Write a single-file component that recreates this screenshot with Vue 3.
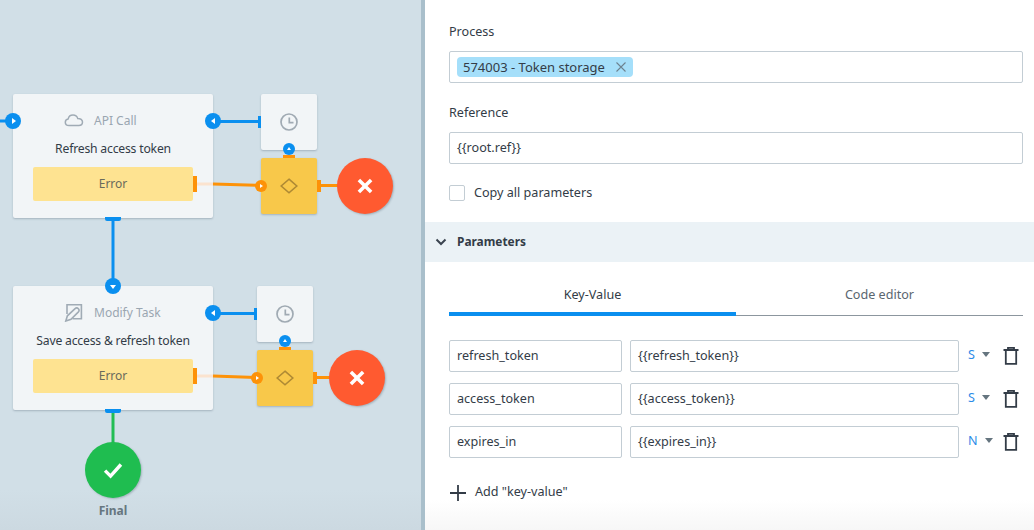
<template>
  <div class="page">
    <div class="canvas">
      <div v-for="task in tasks" :key="task.name" class="task" :style="{ top: task.top + 'px' }">
        <div class="task-head">
          <svg v-if="task.icon === 'cloud'" class="task-icon" viewBox="0 0 20 20" width="20" height="20">
            <path d="M5 15.500C2.800 15.500 1.300 14 1.300 12.200C1.300 10.400 2.600 9.100 4.200 8.900C4.700 6.600 6.600 5 9 5C11.300 5 13.100 6.400 13.700 8.400C16.500 8.300 18.500 9.900 18.500 12C18.500 14 17 15.500 14.800 15.500Z" fill="none" stroke="#a0abb5" stroke-width="1.500" />
          </svg>
          <svg v-else class="task-icon" viewBox="0 0 20 20" width="20" height="20">
            <path d="M3 12V2.800H17.400V16.800H8.500" fill="none" stroke="#a0abb5" stroke-width="1.600" />
            <path d="M1.800 19L3.400 13.800L10.800 6.800C12 5.800 13.500 5.800 14.400 6.700C15.300 7.700 15.200 9 14.200 10.100L7 17.300Z" fill="#f2f5f7" stroke="#a0abb5" stroke-width="1.600" />
          </svg>
          <span class="task-type">{{ task.type }}</span>
        </div>
        <div class="task-name">{{ task.name }}</div>
        <div class="task-error">Error<i class="err-port"></i></div>
      </div>

      <svg class="wires" width="425" height="530">
        <path d="M0 121H13" stroke="#0a8fef" stroke-width="3" fill="none" />
        <path d="M213 121.500H261" stroke="#0a8fef" stroke-width="3" fill="none" />
        <path d="M113 218V286" stroke="#0a8fef" stroke-width="3" fill="none" />
        <path d="M213 313.500H257" stroke="#0a8fef" stroke-width="3" fill="none" />
        <path d="M113 410V443" stroke="#22bd54" stroke-width="3" fill="none" />
        <path d="M213 184L261 185.500" stroke="#fd9208" stroke-width="3" fill="none" />
        <path d="M197 184H213" stroke="#fbe3cf" stroke-width="3" fill="none" />
        <path d="M213 376L257 377.500" stroke="#fd9208" stroke-width="3" fill="none" />
        <path d="M197 376H213" stroke="#fbe3cf" stroke-width="3" fill="none" />
        <path d="M317 185.500H340" stroke="#fd9208" stroke-width="3" fill="none" />
        <path d="M313 377.500H332" stroke="#fd9208" stroke-width="3" fill="none" />
      </svg>

      <i class="port-bottom p1"></i>
      <i class="port-bottom p2"></i>

      <div v-for="group in groups" :key="group.timerTop">
        <div class="square timer" :style="{ left: group.left + 'px', top: group.timerTop + 'px' }">
          <svg viewBox="0 0 20 20" width="20" height="20">
            <circle cx="10" cy="10" r="8" fill="none" stroke="#a0aab3" stroke-width="1.700" />
            <path d="M10.300 5.500V10.700H14.500" fill="none" stroke="#a0aab3" stroke-width="1.700" />
          </svg>
        </div>
        <div class="square gateway" :style="{ left: group.left + 'px', top: group.timerTop + 64 + 'px' }">
          <svg viewBox="0 0 18 16" width="18" height="16">
            <path d="M9 1.200L16.800 8L9 14.800L1.200 8Z" fill="none" stroke="#af8a34" stroke-width="1.600" />
          </svg>
        </div>
        <span class="dot blue small up" :style="{ left: group.left + 22 + 'px', top: group.timerTop + 49 + 'px' }"></span>
        <i class="tick-top" :style="{ left: group.left + 22 + 'px', top: group.timerTop + 61 + 'px' }"></i>
        <i class="tick-side" :style="{ left: group.left + 56 + 'px', top: group.timerTop + 86 + 'px' }"></i>
        <i class="tick-timer" :style="{ left: group.left - 3 + 'px', top: group.timerTop + 22 + 'px' }"></i>
        <span class="dot orange" :style="{ left: group.left - 6 + 'px', top: group.timerTop + 86 + 'px' }"></span>
        <span class="dot blue left" :style="{ left: group.dotLeft + 'px', top: group.timerTop + 19 + 'px' }"></span>
        <div class="end red" :style="{ left: group.endLeft + 'px', top: group.timerTop + 64 + 'px' }">
          <svg viewBox="0 0 18 18" width="20" height="20">
            <path d="M3.500 3.500L14.500 14.500M14.500 3.500L3.500 14.500" stroke="#fff" stroke-width="3.200" fill="none" />
          </svg>
        </div>
      </div>

      <span class="dot blue right start"></span>
      <span class="dot blue down mid"></span>

      <div class="end green">
        <svg viewBox="0 0 18 18" width="22" height="22">
          <path d="M2.500 9.500L7 14L15.500 4.500" stroke="#fff" stroke-width="2.800" fill="none" />
        </svg>
      </div>
      <div class="final">Final</div>
    </div>

    <div class="panel">
      <div class="fields">
        <label class="field-label">Process</label>
        <div class="input tag-input">
          <span class="tag">574003 - Token storage
            <svg viewBox="0 0 12 12" width="12" height="12">
              <path d="M1.500 1.500L10.500 10.500M10.500 1.500L1.500 10.500" stroke="#6d8290" stroke-width="1.100" fill="none" />
            </svg>
          </span>
        </div>
        <label class="field-label second">Reference</label>
        <div class="input">{{ "{" + "{root.ref}" + "}" }}</div>
        <div class="check-row">
          <span class="checkbox"></span>
          <span>Copy all parameters</span>
        </div>
      </div>

      <div class="section-head">
        <svg viewBox="0 0 12 8" width="12" height="8">
          <path d="M1.500 1.500L6 6L10.500 1.500" stroke="#3b4450" stroke-width="2" fill="none" />
        </svg>
        <span>Parameters</span>
      </div>

      <div class="params">
        <div class="tabs">
          <div class="tab active">Key-Value</div>
          <div class="tab">Code editor</div>
        </div>
        <div v-for="row in rows" :key="row.key" class="row">
          <div class="input key">{{ row.key }}</div>
          <div class="input value">{{ "{" + "{" + row.key + "}" + "}" }}</div>
          <div class="type-select">
            <span class="type">{{ row.type }}</span>
            <i class="caret"></i>
          </div>
          <svg class="trash" viewBox="0 0 16 18" width="16" height="18">
            <path d="M0.500 3H15.500M5 3V0.800H11V3M2.800 3V16.800H13.200V3" fill="none" stroke="#333c47" stroke-width="1.800" />
          </svg>
        </div>
        <div class="add">
          <svg viewBox="0 0 16 16" width="16" height="16">
            <path d="M8 0V16M0 8H16" stroke="#333c47" stroke-width="1.800" fill="none" />
          </svg>
          <span>Add "key-value"</span>
        </div>
      </div>
    </div>
  </div>
</template>

<script setup>
const tasks = [
  { top: 94, icon: "cloud", type: "API Call", name: "Refresh access token" },
  { top: 286, icon: "edit", type: "Modify Task", name: "Save access & refresh token" },
];

const groups = [
  { left: 261, timerTop: 94, endLeft: 337, dotLeft: 205 },
  { left: 257, timerTop: 286, endLeft: 329, dotLeft: 205 },
];

const rows = [
  { key: "refresh_token", type: "S" },
  { key: "access_token", type: "S" },
  { key: "expires_in", type: "N" },
];
</script>

<style scoped>
.page {
  display: flex;
  width: 1034px;
  height: 530px;
  overflow: hidden;
  font-family: "Noto Sans", "Open Sans", sans-serif;
  font-size: 12.600px;
  color: #333c47;
}

.canvas {
  position: relative;
  box-sizing: border-box;
  width: 425px;
  flex: none;
  background: linear-gradient(#d1dfe7 490px, #ccd9e1);
  border-right: 4px solid #a9bfcb;
}

.wires {
  position: absolute;
  left: 0;
  top: 0;
}

.task {
  position: absolute;
  left: 13px;
  width: 200px;
  height: 124px;
  box-sizing: border-box;
  padding: 0 20px;
  background: #f2f5f7;
  border-radius: 2px;
  box-shadow: 0 1px 2px rgba(60, 80, 95, 0.3);
  text-align: center;
}

.task-head {
  display: flex;
  align-items: center;
  height: 36px;
  padding-top: 8px;
  padding-left: 31px;
  gap: 10px;
  color: #9aa6b1;
}

.task-type {
  font-size: 12px;
}

.task-name {
  height: 21px;
  line-height: 21px;
  margin-bottom: 8px;
  white-space: nowrap;
  font-size: 12.200px;
  letter-spacing: -0.2px;
}

.task-error {
  position: relative;
  height: 34px;
  line-height: 34px;
  background: #fee391;
  border-radius: 2px;
  color: #6a6b5c;
  font-size: 12px;
}

.err-port {
  position: absolute;
  right: -4px;
  top: 9px;
  width: 4px;
  height: 16px;
  background: #fd9208;
}

.port-bottom {
  position: absolute;
  left: 105px;
  width: 16px;
  height: 4px;
  background: #0a8fef;
  border-radius: 0 0 2px 2px;
}

.p1 {
  top: 217px;
}

.p2 {
  top: 409px;
}

.square {
  position: absolute;
  width: 56px;
  height: 56px;
  display: flex;
  align-items: center;
  justify-content: center;
  border-radius: 2px;
  box-shadow: 0 1px 2px rgba(60, 80, 95, 0.3);
}

.timer {
  background: #f2f5f7;
}

.gateway {
  background: #f8c84a;
}

.tick-top {
  position: absolute;
  width: 12px;
  height: 3px;
  background: #fd9208;
}

.tick-side {
  position: absolute;
  width: 4px;
  height: 12px;
  background: #fd9208;
}

.tick-timer {
  position: absolute;
  width: 3px;
  height: 12px;
  background: #0a8fef;
}

.dot {
  position: absolute;
  width: 12px;
  height: 12px;
  border-radius: 50%;
}

.dot::after {
  content: "";
  position: absolute;
  width: 0;
  height: 0;
  left: 50%;
  top: 50%;
}

.dot.blue {
  width: 16px;
  height: 16px;
  background: #0a8fef;
}

.dot.small {
  width: 12px;
  height: 12px;
}

.dot.orange {
  background: #fd9208;
}

.dot.orange::after {
  margin: -2px 0 0 -1px;
  border-left: 3px solid #fff;
  border-top: 2px solid transparent;
  border-bottom: 2px solid transparent;
}

.dot.up::after {
  margin: -2px 0 0 -2.500px;
  border-bottom: 3px solid #fff;
  border-left: 2.500px solid transparent;
  border-right: 2.500px solid transparent;
}

.dot.left::after {
  margin: -3px 0 0 -2px;
  border-right: 4px solid #fff;
  border-top: 3px solid transparent;
  border-bottom: 3px solid transparent;
}

.dot.right::after {
  margin: -3px 0 0 -1px;
  border-left: 4px solid #fff;
  border-top: 3px solid transparent;
  border-bottom: 3px solid transparent;
}

.dot.down::after {
  margin: -1px 0 0 -3px;
  border-top: 4px solid #fff;
  border-left: 3px solid transparent;
  border-right: 3px solid transparent;
}

.start {
  left: 5px;
  top: 113px;
}

.mid {
  left: 105px;
  top: 278px;
}

.end {
  position: absolute;
  width: 56px;
  height: 56px;
  display: flex;
  align-items: center;
  justify-content: center;
  border-radius: 50%;
  box-shadow: 1px 1px 2px rgba(60, 80, 95, 0.3);
}

.red {
  background: #ff5a30;
}

.green {
  left: 85px;
  top: 442px;
  background: #1fbd50;
}

.final {
  position: absolute;
  left: 73px;
  top: 502px;
  width: 80px;
  text-align: center;
  font-size: 12px;
  font-weight: 700;
  color: #66767f;
}

.panel {
  flex: 1;
  background: linear-gradient(#fff 500px, #f7f7f7);
  display: flex;
  flex-direction: column;
}

.fields {
  padding: 23px 11px 0 24px;
  height: 222px;
  box-sizing: border-box;
}

.field-label {
  display: block;
  height: 18px;
  line-height: 18px;
  margin-bottom: 10px;
}

.second {
  margin-top: 21px;
}

.input {
  box-sizing: border-box;
  height: 32px;
  line-height: 30px;
  padding: 0 7px;
  border: 1px solid #c3cdd4;
  border-radius: 2px;
  background: #fff;
  white-space: nowrap;
}

.tag-input {
  display: flex;
  align-items: center;
}

.tag {
  display: inline-flex;
  align-items: center;
  gap: 10px;
  height: 20px;
  padding: 0 6px;
  background: #a5dffa;
  border-radius: 4px;
  font-size: 13px;
}

.check-row {
  display: flex;
  align-items: center;
  gap: 9px;
  margin-top: 20px;
}

.checkbox {
  box-sizing: border-box;
  width: 16px;
  height: 16px;
  border: 1px solid #c3cdd4;
  border-radius: 2px;
}

.section-head {
  height: 40px;
  display: flex;
  align-items: center;
  gap: 10px;
  padding-left: 10px;
  background: #ebf2f6;
  font-weight: 700;
  font-size: 11.900px;
}

.section-head span {
  margin-bottom: 2px;
}

.params {
  padding: 0 11px 0 24px;
}

.tabs {
  display: flex;
  box-sizing: border-box;
  height: 54px;
  margin-bottom: 24px;
  border-bottom: 1px solid #8c969e;
}

.tab {
  flex: 1;
  box-sizing: border-box;
  height: 54px;
  padding-top: 24px;
  line-height: 18px;
  text-align: center;
  color: #5a6670;
}

.tab.active {
  color: #333c47;
  border-bottom: 4px solid #0a8fef;
}

.row {
  display: flex;
  align-items: center;
  height: 32px;
  margin-bottom: 11px;
}

.key {
  width: 173px;
  margin-right: 8px;
}

.value {
  width: 329px;
  margin-right: 9px;
}

.type-select {
  display: flex;
  align-items: center;
  width: 35px;
  margin-bottom: 3px;
}

.type {
  margin-right: 7px;
  color: #2d8be8;
}

.caret {
  width: 0;
  height: 0;
  border-top: 5px solid #65757f;
  border-left: 4px solid transparent;
  border-right: 4px solid transparent;
}

.add {
  display: flex;
  align-items: center;
  gap: 9px;
  margin-top: 25px;
  padding-left: 1px;
}

.add span {
  margin-bottom: 2px;
}
</style>

<style>
body {
  background: #fff;
}
</style>
